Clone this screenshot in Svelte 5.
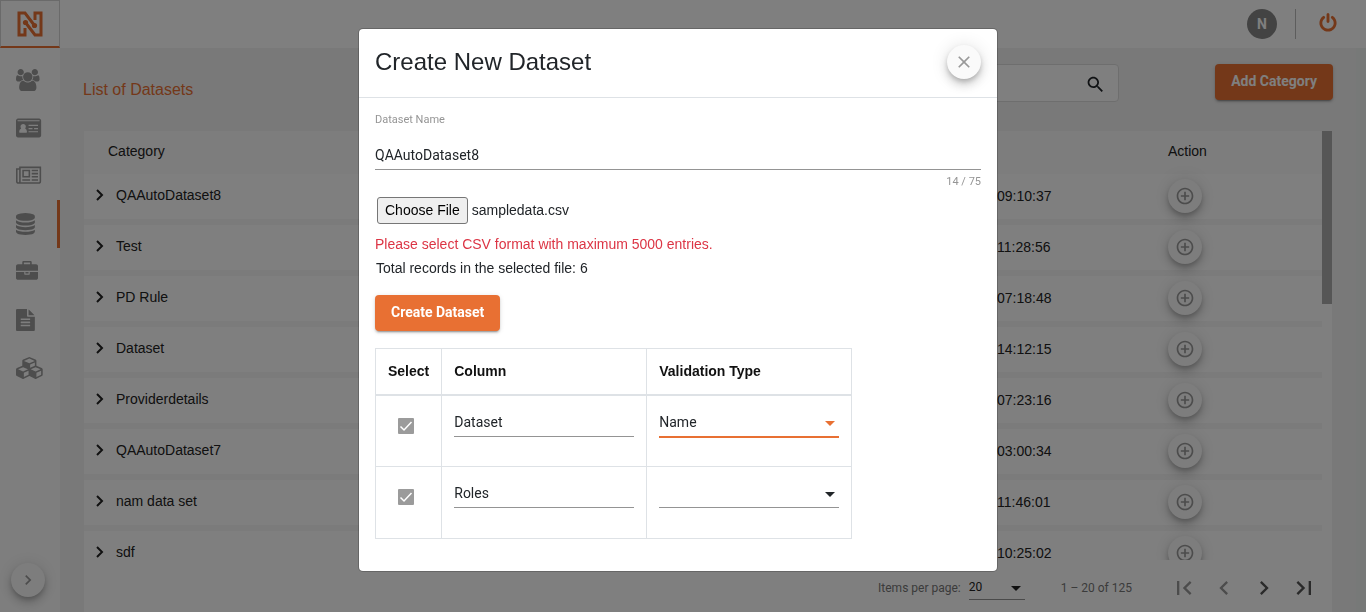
<script>
  import { onMount } from 'svelte';

  const bars = 'v-64q0-14-9-23t-23-9h-704q-14 0-23 9t-9 23v64q0 14 9 23t23 9h704q14 0 23-9t9-23z';
  const layer = 'q237 0 443-43t325-127v170q0 69-103 128t-280 93.5-385 34.5-385-34.5-280-93.5-103-128v-170q119 84 325 127t443 43z';

  const nav = [
    { label: 'Users', width: 1920, d: 'M593 896q-162 5-265 128h-134q-82 0-138-40.5t-56-118.5q0-353 124-353 6 0 43.5 21t97.5 42.5 119 21.5q67 0 133-23-5 37-5 66 0 139 81 256zm1071 637q0 120-73 189.5t-194 69.5h-874q-121 0-194-69.5t-73-189.5q0-53 3.5-103.5t14-109 26.5-108.5 43-97.5 62-81 85.5-53.5 111.5-20q10 0 43 21.5t73 48 107 48 135 21.5 135-21.5 107-48 73-48 43-21.5q61 0 111.5 20t85.5 53.5 62 81 43 97.5 26.5 108.5 14 109 3.5 103.5zm-1024-1277q0 106-75 181t-181 75-181-75-75-181 75-181 181-75 181 75 75 181zm704 384q0 159-112.5 271.5t-271.5 112.5-271.5-112.5-112.5-271.5 112.5-271.5 271.5-112.5 271.5 112.5 112.5 271.5zm576 225q0 78-56 118.5t-138 40.5h-134q-103-123-265-128 81-117 81-256 0-29-5-66 66 23 133 23 59 0 119-21.5t97.5-42.5 43.5-21q124 0 124 353zm-128-609q0 106-75 181t-181 75-181-75-75-181 75-181 181-75 181 75 75 181z' },
    { label: 'Identity', width: 2048, d: 'M160 128h1728q66 0 113 47t47 113v1216q0 66-47 113t-113 47h-1728q-66 0-113-47t-47-113v-1216q0-66 47-113t113-47zM128 256v64q0 16 16 16h1760q16 0 16-16v-64zM896 1216q0-220-150-288 54-60 54-150 0-90-62-152t-154-62-154 62-62 152q0 90 54 150-166 68-166 288 0 64 64 64h512q64 0 64-64zM1024 640v96h768v-96zM1024 896v96h320v-96zM1472 896v96h320v-96zM1024 1152v96h768v-96z' },
    { label: 'News', width: 2048, d: 'M1024 512h-384v384h384v-384zm128 640v128h-640v-128h640zm0-768v640h-640v-640h640zm640 768v128h-512v-128h512zm0-256v128h-512v-128h512zm0-256v128h-512v-128h512zm0-256v128h-512v-128h512zm-1536 960v-960h-128v960q0 26 19 45t45 19 45-19 19-45zm1664 0v-1088h-1536v1088q0 33-11 64h1483q26 0 45-19t19-45zm128-1216v1216q0 80-56 136t-136 56h-1664q-80 0-136-56t-56-136v-1088h256v-128h1792z' },
    { label: 'Datasets', width: 1536, active: true, d: `M768 768${layer}M768 1536${layer}M768 1152${layer}M768 0q208 0 385 34.5t280 93.5 103 128v128q0 69-103 128t-280 93.5-385 34.5-385-34.5-280-93.5-103-128v-128q0-69 103-128t280-93.5 385-34.5z` },
    { label: 'Projects', width: 1792, d: 'M640 256h512v-128h-512v128zm1152 640v480q0 66-47 113t-113 47h-1472q-66 0-113-47t-47-113v-480h672v160q0 26 19 45t45 19h320q26 0 45-19t19-45v-160h672zm-768 0v128h-256v-128h256zm768-480v384h-1792v-384q0-66 47-113t113-47h352v-160q0-40 28-68t68-28h576q40 0 68 28t28 68v160h352q66 0 113 47t47 113z' },
    { label: 'Documents', width: 1536, d: `M1468 476q14 14 28 36h-472v-472q22 14 36 28zM992 640h544v1056q0 40-28 68t-68 28h-1344q-40 0-68-28t-28-68v-1600q0-40 28-68t68-28h800v544q0 40 28 68t68 28zM1152 1376${bars}M1152 1120${bars}M1152 864${bars}` },
    { label: 'Modules', width: 2176, d: 'M640 1632l384-192v-314l-384 164v342zm-64-454l404-173-404-173-404 173zm1088 454l384-192v-314l-384 164v342zm-64-454l404-173-404-173-404 173zm-448-293l384-165v-266l-384 164v267zm-64-379l441-189-441-189-441 189zm1088 518v416q0 36-19 67t-52 47l-448 224q-25 14-57 14t-57-14l-448-224q-4-2-7-4-2 2-7 4l-448 224q-25 14-57 14t-57-14l-448-224q-33-16-52-47t-19-67v-416q0-38 21.5-70t56.5-48l434-186v-400q0-38 21.5-70t56.5-48l448-192q23-10 50-10t50 10l448 192q35 16 56.5 48t21.5 70v400l434 186q36 16 57 48t21 70z' }
  ];

  const datasets = [
    ['QAAutoDataset8', '09:10:37'],
    ['Test', '11:28:56'],
    ['PD Rule', '07:18:48'],
    ['Dataset', '14:12:15'],
    ['Providerdetails', '07:23:16'],
    ['QAAutoDataset7', '03:00:34'],
    ['nam data set', '11:46:01'],
    ['sdf', '10:25:02']
  ];

  const pager = [
    { label: 'First page', off: true, d: 'M18.41 16.59L13.82 12l4.59-4.59L17 6l-6 6 6 6zM6 6h2v12H6z' },
    { label: 'Previous page', off: true, d: 'M15.41 7.41L14 6l-6 6 6 6 1.41-1.41L10.83 12z' },
    { label: 'Next page', off: false, d: 'M10 6L8.59 7.41 13.17 12l-4.58 4.59L10 18l6-6z' },
    { label: 'Last page', off: false, d: 'M5.59 7.41L10.18 12l-4.59 4.59L7 18l6-6-6-6zM16 6h2v12h-2z' }
  ];

  let name = $state('QAAutoDataset8');
  let columns = $state([
    { column: 'Dataset', type: 'Name', focused: true },
    { column: 'Roles', type: '', focused: false }
  ]);
  let fileInput;

  onMount(() => {
    const transfer = new DataTransfer();
    transfer.items.add(new File([''], 'sampledata.csv', { type: 'text/csv' }));
    fileInput.files = transfer.files;
  });
</script>

<div class="app">
  <aside class="sidebar">
    <a class="logo" href="#home" aria-label="Home">
      <svg width="26" height="26" viewBox="0 0 26 26">
        <g fill="none" stroke="currentColor" stroke-width="3">
          <path d="M17.5 14.5L8 2H2v22h6v-7" />
          <path d="M8.500 11.500L18 24h6V2h-6v7" />
        </g>
        <circle cx="8.500" cy="11.500" r="2.600" fill="currentColor" />
        <circle cx="17.500" cy="14.500" r="2.600" fill="currentColor" />
      </svg>
    </a>
    <nav>
      {#each nav as item}
        <a href="#{item.label.toLowerCase()}" class:active={item.active} aria-label={item.label}>
          <svg viewBox="0 0 {item.width} 1792" height="22"><path fill-rule={item.label === 'Identity' ? 'evenodd' : 'nonzero'} d={item.d} /></svg>
        </a>
      {/each}
    </nav>
    <button class="fab expand" aria-label="Expand menu">
      <svg width="20" height="20" viewBox="0 0 24 24"><path d={pager[2].d} /></svg>
    </button>
  </aside>

  <div class="page">
    <header class="topbar">
      <span class="avatar">N</span>
      <button class="power" aria-label="Log out">
        <svg width="20" height="20" viewBox="0 0 1792 1792"><path d="M1664 896q0 156-61 298t-164 245-245 164-298 61-298-61-245-164-164-245-61-298q0-182 80.5-343t226.5-270q43-32 95.5-25t83.5 50q32 42 24.5 94.5t-49.5 84.5q-98 74-151.5 181t-53.5 228q0 104 40.5 198.5t109.5 163.5 163.5 109.5 198.5 40.5 198.5-40.5 163.5-109.5 109.5-163.5 40.5-198.5q0-121-53.5-228t-151.5-181q-42-32-49.5-84.5t24.5-94.5q31-43 84-50t95 25q146 109 226.5 270t80.5 343zm-640-768v640q0 52-38 90t-90 38-90-38-38-90v-640q0-52 38-90t90-38 90 38 38 90z" /></svg>
      </button>
    </header>

    <main>
      <div class="toolbar">
        <h1>List of Datasets</h1>
        <div class="search">
          <input type="search" aria-label="Search datasets" />
          <button aria-label="Search">
            <svg width="21" height="21" viewBox="0 0 24 24"><path d="M15.500 14h-.79l-.28-.27C15.410 12.590 16 11.110 16 9.500 16 5.910 13.090 3 9.500 3S3 5.910 3 9.500 5.910 16 9.500 16c1.610 0 3.090-.59 4.230-1.570l.27.28v.79l5 4.990L20.490 19l-4.990-5zm-6 0C7.010 14 5 11.990 5 9.500S7.010 5 9.500 5 14 7.010 14 9.500 11.990 14 9.500 14z" /></svg>
          </button>
        </div>
        <button class="primary">Add Category</button>
      </div>

      <section class="panel">
        <div class="scroller">
          <table class="list">
            <colgroup><col /><col class="time" /><col class="act" /></colgroup>
            <thead>
              <tr><th>Category</th><th></th><th class="action">Action</th></tr>
            </thead>
            <tbody>
              {#each datasets as [category, time]}
                <tr>
                  <td>
                    <button class="row-toggle">
                      <svg width="8" height="12" viewBox="0 0 8 12"><path d="M1 1l5 5-5 5" fill="none" stroke="currentColor" stroke-width="2" /></svg>
                      {category}
                    </button>
                  </td>
                  <td>{time}</td>
                  <td>
                    <button class="fab" aria-label="Add to {category}">
                      <svg width="20" height="20" viewBox="0 0 24 24"><path d="M13 7h-2v4H7v2h4v4h2v-4h4v-2h-4V7zm-1-5C6.480 2 2 6.480 2 12s4.480 10 10 10 10-4.480 10-10S17.520 2 12 2zm0 18c-4.410 0-8-3.590-8-8s3.590-8 8-8 8 3.590 8 8-3.590 8-8 8z" /></svg>
                    </button>
                  </td>
                </tr>
              {/each}
            </tbody>
          </table>
          <div class="track"><div class="thumb"></div></div>
        </div>

        <footer class="paginator">
          <label for="page-size">Items per page:</label>
          <span class="select size">
            <select id="page-size"><option>20</option></select>
          </span>
          <span class="range">1 – 20 of 125</span>
          <div class="pages">
            {#each pager as p}
              <button class:off={p.off} disabled={p.off} aria-label={p.label}>
                <svg width="28" height="28" viewBox="0 0 24 24"><path d={p.d} /></svg>
              </button>
            {/each}
          </div>
        </footer>
      </section>
    </main>
  </div>
  <div class="gutter"></div>
</div>

<div class="overlay">
  <div class="dialog" role="dialog" aria-modal="true" aria-labelledby="dialog-title">
    <div class="dialog-head">
      <h2 id="dialog-title">Create New Dataset</h2>
      <button class="fab" aria-label="Close">
        <svg width="20" height="20" viewBox="0 0 24 24"><path d="M19 6.410L17.590 5 12 10.590 6.410 5 5 6.410 10.590 12 5 17.590 6.410 19 12 13.410 17.590 19 19 17.590 13.410 12z" /></svg>
      </button>
    </div>
    <form class="dialog-body">
      <label class="name-label" for="dataset-name">Dataset Name</label>
      <input class="line" id="dataset-name" type="text" bind:value={name} />
      <div class="hint">{name.length} / 75</div>
      <input class="file" type="file" accept=".csv" aria-label="Dataset file" bind:this={fileInput} />
      <p class="warn">Please select CSV format with maximum 5000 entries.</p>
      <p class="total">Total records in the selected file: 6</p>
      <button class="primary" type="button">Create Dataset</button>

      <table class="columns">
        <thead>
          <tr><th class="pick">Select</th><th>Column</th><th>Validation Type</th></tr>
        </thead>
        <tbody>
          {#each columns as row}
            <tr>
              <td class="pick"><input type="checkbox" checked disabled aria-label="Select {row.column}" /></td>
              <td><input class="line" type="text" aria-label="Column name" bind:value={row.column} /></td>
              <td>
                <span class="select" class:focused={row.focused}>
                  <select aria-label="Validation type for {row.column}" bind:value={row.type}>
                    <option value=""></option>
                    <option value="Name">Name</option>
                  </select>
                </span>
              </td>
            </tr>
          {/each}
        </tbody>
      </table>
    </form>
  </div>
</div>

<style>
  :global(body) { margin: 0; }
  :global(*) { box-sizing: border-box; }

  .app, .overlay {
    font: 14px/20px "Liberation Sans", Arial, sans-serif;
    color: #212529;
  }
  button, input, select { font: inherit; color: inherit; margin: 0; }
  button { border: 0; padding: 0; background: none; cursor: pointer; }
  svg { display: block; fill: currentColor; overflow: visible; }

  .app { display: flex; height: 100vh; overflow: hidden; background: #f3f3f3; }

  .sidebar { display: flex; flex-direction: column; flex: 0 0 60px; background: #fdfdfd; }
  .logo {
    display: flex; align-items: center; justify-content: center;
    height: 48px; color: #e87033; background: #fff;
    border: 1px solid #d5d5d5; border-bottom: 2px solid #e87033;
  }
  nav { margin-top: 8px; }
  nav a {
    display: flex; align-items: center; height: 48px; padding-left: 16px;
    color: #9a9a9a; border-right: 3px solid transparent;
  }
  nav a.active { border-color: #e87033; }
  .expand { margin: auto 0 15px 11px; }

  .fab {
    display: flex; align-items: center; justify-content: center;
    width: 34px; height: 34px; border-radius: 50%;
    background: #fafafa; color: #999;
    box-shadow: 0 3px 5px -1px rgba(0, 0, 0, .2), 0 6px 10px rgba(0, 0, 0, .14), 0 1px 18px rgba(0, 0, 0, .12);
  }

  .page { flex: 1; min-width: 0; display: flex; flex-direction: column; }
  .topbar {
    display: flex; align-items: center; justify-content: flex-end;
    flex: 0 0 48px; padding-right: 18px; background: #fff; margin-right: -10px;
  }
  .avatar {
    width: 30px; height: 30px; border-radius: 50%; background: #868686; color: #fff;
    text-align: center; font: 700 14px/30px Roboto, sans-serif;
  }
  .power { margin-left: 18px; padding: 4px 10px 6px 22px; border-left: 1px solid #bbb; color: #e87033; }

  main { flex: 1; min-height: 0; display: flex; flex-direction: column; padding: 16px 24px 0; }
  .toolbar { display: flex; align-items: flex-start; height: 67px; margin: 0 -1px; }
  h1 { margin: 16px 0 0; font-size: 16px; line-height: 20px; font-weight: 400; color: #e87033; }
  .search {
    display: flex; align-items: center; width: 300px; height: 38px; margin-left: auto; margin-right: 96px;
    background: #fff; border: 1px solid #ddd; border-radius: 4px;
  }
  .search input { flex: 1; min-width: 0; border: 0; background: none; outline: 0; }
  .search button { padding: 2px 12px 0; }
  .primary {
    padding: 0 16px 2px; height: 36px; border-radius: 4px; background: #e87033; color: #fff;
    font: 700 14px/34px Roboto, sans-serif;
    box-shadow: 0 3px 1px -2px rgba(0, 0, 0, .2), 0 2px 2px rgba(0, 0, 0, .14), 0 1px 5px rgba(0, 0, 0, .12);
  }

  .panel { flex: 1; min-height: 0; display: flex; flex-direction: column; background: #fff; }
  .scroller { flex: 1; min-height: 0; display: flex; overflow: hidden; }
  .track { flex: 0 0 10px; }
  .thumb { height: 173px; background: #acacac; }
  .list { flex: 1; align-self: flex-start; border-collapse: separate; border-spacing: 0; table-layout: fixed; color: #222; }
  .list .time { width: 171px; }
  .list .act { width: 154px; }
  .list th { height: 43px; padding: 0 0 4px 24px; text-align: left; font-weight: 400; background: #fafafa; }
  .list th.action { padding-left: 0; }
  .list td { height: 51px; padding: 0 0 2px; border-bottom: 6px solid #f6f6f6; }
  .row-toggle { display: flex; align-items: center; gap: 12px; padding: 0 12px 2px; }

  .paginator {
    display: flex; align-items: center; flex: 0 0 52px; padding: 4px 14px 0;
    justify-content: flex-end; font: 12px/20px Roboto, sans-serif; color: #777;
  }
  .size { width: 56px; margin: 0 36px 0 8px; color: #222; }
  .paginator .size select { height: 24px; padding-bottom: 2px; }
  .pages { display: flex; gap: 12px; margin-left: 38px; color: #555; }
  .off { color: #999; }

  .gutter { flex: 0 0 10px; margin-top: 48px; background: #eef2f1; }

  .overlay {
    position: fixed; inset: 0; display: flex; justify-content: center; align-items: flex-start;
    padding: 28px 10px 28px 0; background: rgba(0, 0, 0, .5); overflow: hidden;
  }
  .dialog {
    width: 640px; background: #fff; background-clip: padding-box;
    border: 1px solid rgba(0, 0, 0, .2); border-radius: 5px;
  }
  .dialog-head {
    display: flex; align-items: center; justify-content: space-between;
    height: 69px; padding: 0 16px 2px; border-bottom: 1px solid #dee2e6;
  }
  h2 { margin: 0; font-size: 24px; line-height: 32px; font-weight: 400; }
  .dialog-body { display: flex; flex-direction: column; align-items: flex-start; padding: 12px 16px 32px; }
  .name-label, .hint { font: 11px/20px Roboto, sans-serif; color: #959595; }
  .line {
    width: 100%; height: 28px; padding: 0 0 1px; border: 0; border-bottom: 1px solid #949494;
    background: none; outline: 0; font: 14px/20px Roboto, sans-serif;
  }
  .dialog-body > .line { margin-top: 12px; }
  .hint { align-self: flex-end; margin-top: 2px; }
  .file { margin: 5px 2px 0; height: 27px; }
  .file::file-selector-button {
    height: 27px; padding: 0 7px 2px; font: inherit; color: #000;
    background: #efefef; border: 1px solid #767676; border-radius: 3px;
  }
  .warn, .total { margin: 10px 0 0; color: #dc3545; }
  .total { margin: 4px 1px 0; color: #212529; }
  .dialog-body > .primary { margin-top: 17px; }

  .columns { margin-top: 17px; border-collapse: collapse; }
  .columns th, .columns td { width: 205px; height: 72px; padding: 0 12px; border: 1px solid #dee2e6; text-align: left; }
  .columns th { height: 46px; border-bottom-width: 2px; color: #111; }
  .columns td { vertical-align: top; padding-top: 13px; }
  .columns .pick { width: 66px; }
  .columns th.pick { text-align: center; }
  .columns td.pick { padding-left: 22px; }
  .columns input[type="checkbox"] {
    display: block; appearance: none; width: 16px; height: 16px; margin-top: 9px; border-radius: 1px; background: #9b9b9b;
    background-image: url("data:image/svg+xml,%3Csvg xmlns='http://www.w3.org/2000/svg' viewBox='0 0 16 16'%3E%3Cpath d='M2.500 8.500l3.500 3.500 7.500-8' fill='none' stroke='white' stroke-width='1.500'/%3E%3C/svg%3E");
  }

  .select { position: relative; display: block; }
  .select::after {
    content: ""; position: absolute; right: 4px; top: 12px;
    border: 5px solid transparent; border-top-color: currentColor; border-bottom: 0; pointer-events: none;
  }
  .size::after { top: 10px; }
  .select select {
    display: block; appearance: none; width: 100%; height: 28px; padding: 0 0 1px;
    border: 0; border-bottom: 1px solid #949494; border-radius: 0; background: none; outline: 0;
    font-family: Roboto, sans-serif;
  }
  .select.focused::after { color: #e87033; }
  .select.focused select { height: 29px; border-bottom: 2px solid #e87033; }
</style>
